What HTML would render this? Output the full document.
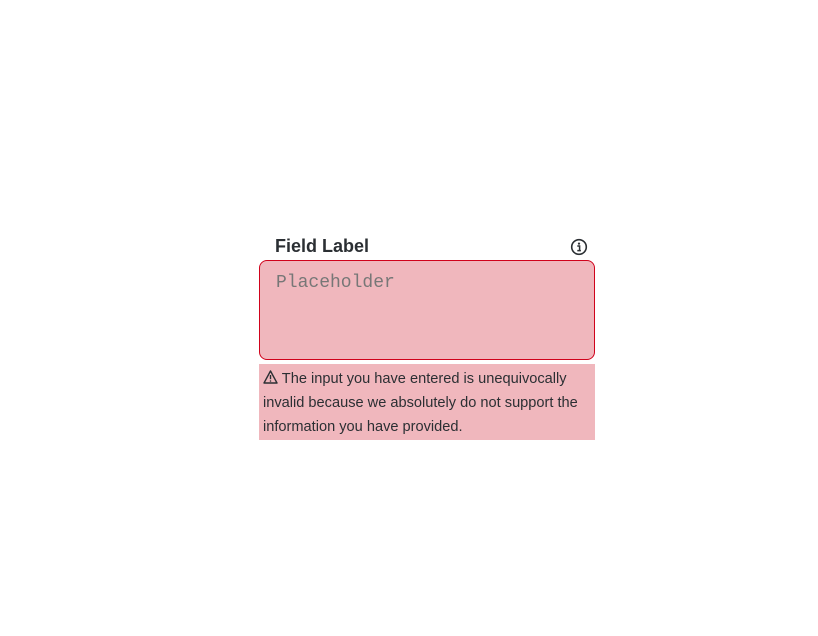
<!DOCTYPE html>
<html><head><style>
body{margin:0;width:818px;height:636px;background:#fff;position:relative;font-family:"Liberation Sans",sans-serif;color:#2b2f33}
.label{position:absolute;left:275px;top:236px;font-size:18px;font-weight:bold;line-height:20px}
.info{position:absolute;left:570px;top:238px}
.box{position:absolute;left:259px;top:260px;width:334px;height:98px;border:1px solid #d0021b;border-radius:8px;background:#f0b7bd}
.ph{position:absolute;left:16px;top:12px;font-family:"Liberation Mono",monospace;font-size:18px;color:#777}
.err{position:absolute;left:259px;top:364px;width:332px;padding:3px 0 0 4px;height:73px;background:#f0b7bd;font-size:14.6px;line-height:24px}
</style></head><body>
<div class="label">Field Label</div>
<svg class="info" width="18" height="18" viewBox="0 0 18 18"><circle cx="9" cy="9" r="7.3" fill="none" stroke="#2b2f33" stroke-width="1.6"/><circle cx="9" cy="5.6" r="1.1" fill="#2b2f33"/><path d="M7.3 8h2.3v4.6M7.3 12.6h3.6" fill="none" stroke="#2b2f33" stroke-width="1.5"/></svg>
<div class="box"><div class="ph">Placeholder</div></div>
<div class="err"><svg width="15" height="14" viewBox="0 0 15 14" style="vertical-align:-1px"><path d="M7.5 1L14 13H1Z" fill="none" stroke="#2b2f33" stroke-width="1.4" stroke-linejoin="round"/><path d="M7.5 5v4.2" stroke="#2b2f33" stroke-width="1.4"/><circle cx="7.5" cy="11" r=".8" fill="#2b2f33"/></svg> The input you have entered is unequivocally invalid because we absolutely do not support the information you have provided.</div>
</body></html>
